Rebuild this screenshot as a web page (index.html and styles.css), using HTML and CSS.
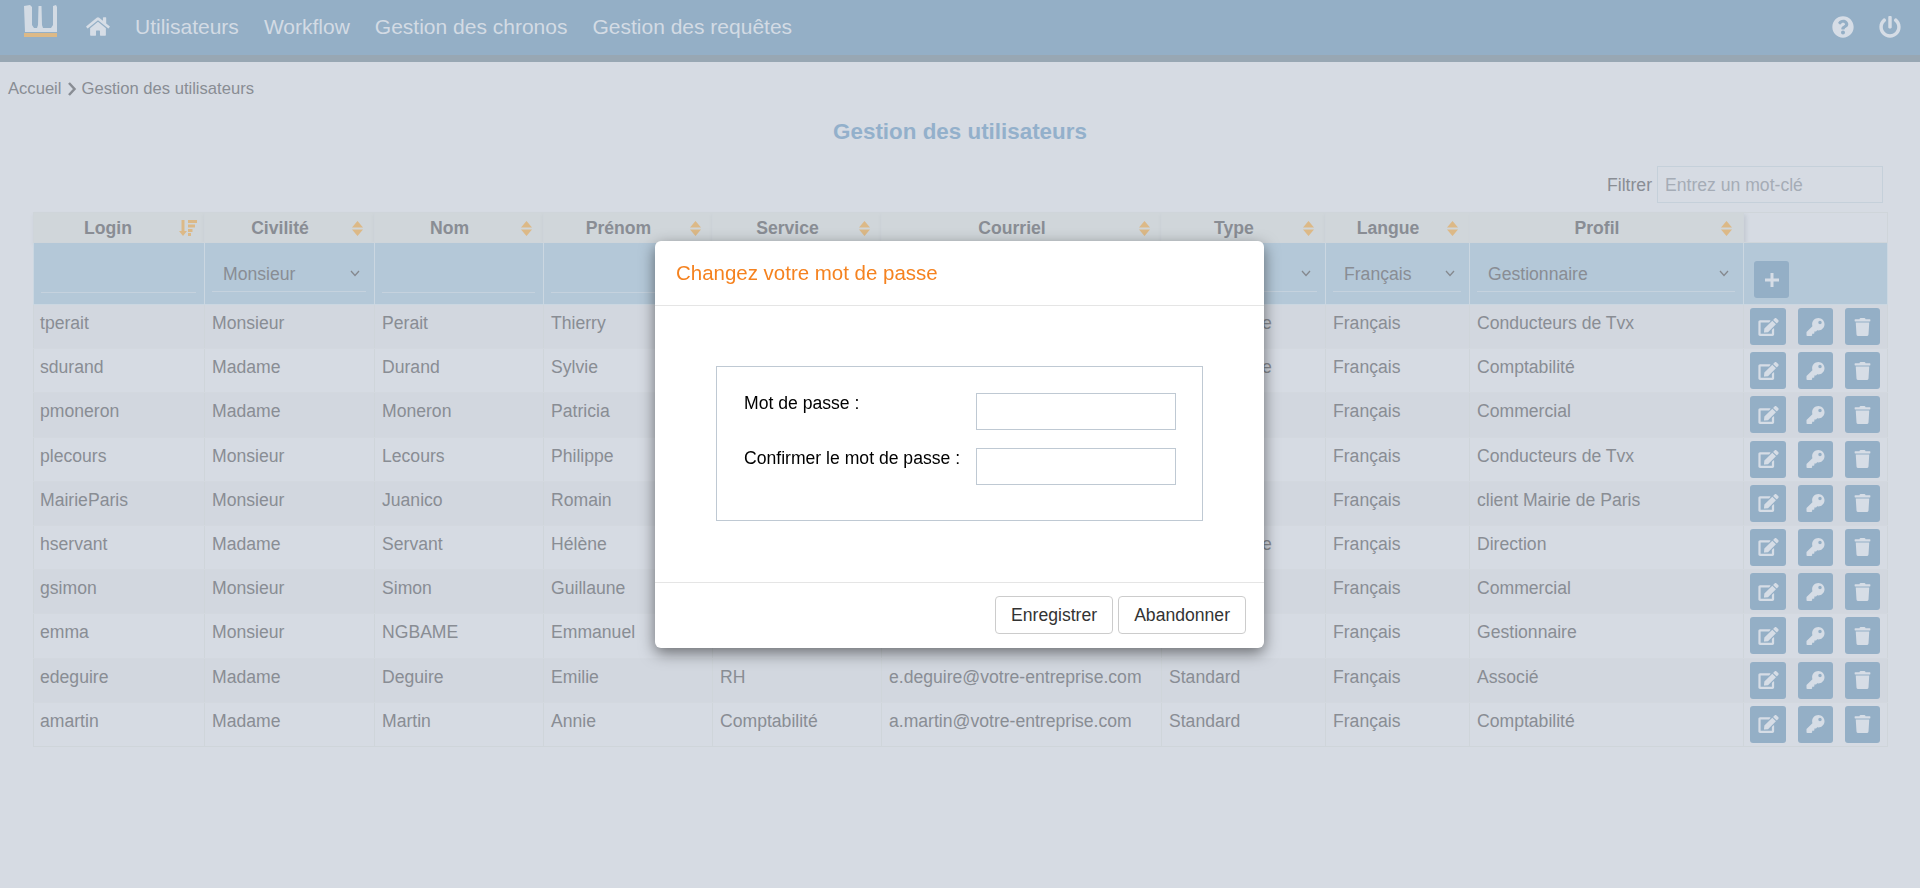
FILE: index.html
```html
<!DOCTYPE html>
<html lang="fr">
  <head>
    <meta charset="utf-8" />
    <title>Gestion des utilisateurs</title>
    <link rel="stylesheet" href="styles.css">
  </head>
  <body>
    <svg class="sprites" aria-hidden="true">
      <symbol id="i-home" viewBox="0 0 576 512"><path d="M280.37 148.26L96 300.11V464a16 16 0 0 0 16 16l112.06-.29a16 16 0 0 0 15.92-16V368a16 16 0 0 1 16-16h64a16 16 0 0 1 16 16v95.64a16 16 0 0 0 16 16.05L464 480a16 16 0 0 0 16-16V300L295.67 148.26a12.19 12.19 0 0 0-15.3 0zM571.6 251.47L488 182.56V44.05a12 12 0 0 0-12-12h-56a12 12 0 0 0-12 12v72.61L318.47 43a48 48 0 0 0-61 0L4.34 251.47a12 12 0 0 0-1.6 16.9l25.5 31A12 12 0 0 0 45.15 301l235.22-193.74a12.19 12.19 0 0 1 15.3 0L530.9 301a12 12 0 0 0 16.9-1.6l25.5-31a12 12 0 0 0-1.7-16.93z"/></symbol>
      <symbol id="i-help" viewBox="0 0 512 512"><path d="M504 256c0 136.997-111.043 248-248 248S8 392.997 8 256C8 119.083 119.043 8 256 8s248 111.083 248 248zM262.655 90c-54.497 0-89.255 22.957-116.549 63.758-3.536 5.286-2.353 12.415 2.715 16.258l34.699 26.31c5.205 3.947 12.621 3.008 16.665-2.122 17.864-22.658 30.113-35.797 57.303-35.797 20.429 0 45.698 13.148 45.698 32.958 0 14.976-12.363 22.667-32.534 33.976C247.128 238.528 216 254.941 216 296v4c0 6.627 5.373 12 12 12h56c6.627 0 12-5.373 12-12v-1.333c0-28.462 83.186-29.647 83.186-106.667 0-58.002-60.165-102-116.531-102zM256 338c-25.365 0-46 20.635-46 46 0 25.364 20.635 46 46 46s46-20.636 46-46c0-25.365-20.635-46-46-46z"/></symbol>
      <symbol id="i-power" viewBox="0 0 512 512"><path d="M400 54.1c63 45 104 118.6 104 201.9 0 136.8-110.8 247.7-247.5 248C120 504.3 8.2 393 8 256.4 7.9 173.1 48.9 99.3 111.8 54.2c11.7-8.3 28-4.8 35 7.7L162.6 90c5.9 10.5 3.1 23.8-6.6 31-41.5 30.8-68 79.6-68 134.9-.1 92.3 74.5 168.1 168 168.1 91.6 0 168.6-74.2 168-169.1-.3-51.8-24.7-101.8-68.1-134-9.7-7.2-12.4-20.5-6.5-30.9l15.8-28.1c7-12.4 23.2-16.1 34.8-7.8zM296 264V24c0-13.3-10.7-24-24-24h-32c-13.3 0-24 10.7-24 24v240c0 13.3 10.7 24 24 24h32c13.3 0 24-10.7 24-24z"/></symbol>
      <symbol id="i-edit" viewBox="0 0 576 512"><path d="M402.6 83.2l90.2 90.2c3.8 3.8 3.8 10 0 13.8L274.4 405.6l-92.8 10.3c-12.4 1.4-22.9-9.1-21.5-21.5l10.3-92.8L388.8 83.2c3.8-3.8 10-3.8 13.8 0zm162-22.9l-48.8-48.8c-15.2-15.2-39.9-15.2-55.2 0l-35.4 35.4c-3.8 3.8-3.8 10 0 13.8l90.2 90.2c3.8 3.8 10 3.8 13.8 0l35.4-35.4c15.2-15.3 15.2-40 0-55.2zM384 346.2V448H64V128h229.8c3.2 0 6.2-1.3 8.5-3.5l40-40c7.6-7.6 2.2-20.5-8.5-20.5H48C21.5 64 0 85.5 0 112v352c0 26.5 21.5 48 48 48h352c26.5 0 48-21.5 48-48V306.2c0-10.7-12.9-16-20.5-8.5l-40 40c-2.2 2.3-3.5 5.3-3.5 8.5z"/></symbol>
      <symbol id="i-key" viewBox="0 0 512 512"><path d="M512 176.001C512 273.203 433.202 352 336 352c-11.22 0-22.19-1.062-32.827-3.069l-24.012 27.014A23.999 23.999 0 0 1 261.223 384H224v40c0 13.255-10.745 24-24 24h-40v40c0 13.255-10.745 24-24 24H24c-13.255 0-24-10.745-24-24v-78.059c0-6.365 2.529-12.47 7.029-16.971l161.802-161.802C163.549 214.038 160 195.258 160 176 160 78.798 238.797.001 335.999 0 433.488-.001 512 78.511 512 176.001zM336 128c0 26.51 21.49 48 48 48s48-21.49 48-48-21.49-48-48-48-48 21.49-48 48z"/></symbol>
      <symbol id="i-trash" viewBox="0 0 448 512"><path d="M432 32H312l-9.4-18.7A24 24 0 0 0 281.1 0H166.8a23.72 23.72 0 0 0-21.4 13.3L136 32H16A16 16 0 0 0 0 48v32a16 16 0 0 0 16 16h416a16 16 0 0 0 16-16V48a16 16 0 0 0-16-16zM53.2 467a48 48 0 0 0 47.9 45h245.8a48 48 0 0 0 47.9-45L416 128H32z"/></symbol>
      <symbol id="i-plus" viewBox="0 0 16 16"><path d="M6.500 1h3v5.500H15v3H9.500V15h-3V9.500H1v-3h5.500z"/></symbol>
      <symbol id="i-sort" viewBox="0 0 11 15"><path d="M5.500 0L11 6.500H0zM0 8.500h11L5.500 15z"/></symbol>
      <symbol id="i-sort-desc" viewBox="0 0 18 16"><path d="M2.500 0h3v11H8l-4 5-4-5h2.500zM9 0h9v3H9zM9 4.500h7v3H9zM9 9h4.500v3H9zM9 13h3v3H9z"/></symbol>
    </svg>

    <header class="navbar">
      <svg class="logo" viewBox="0 0 33 32" aria-label="Logo">
        <path class="logo-mark" d="M0 1l6-1 2 2v18l2 3h3l1-3 .5-19h3l.500 19 1 3h8l2-3V1l3-1 1 2v25H1z"/>
        <rect class="logo-bar" x="0" y="28" width="33" height="4"/>
      </svg>
      <svg class="nav-home"><use href="#i-home"/></svg>
      <nav class="nav-links">
        <a href="#">Utilisateurs</a>
        <a href="#">Workflow</a>
        <a href="#">Gestion des chronos</a>
        <a href="#">Gestion des requêtes</a>
      </nav>
      <div class="nav-tools">
        <svg class="nav-tool"><use href="#i-help"/></svg>
        <svg class="nav-tool"><use href="#i-power"/></svg>
      </div>
    </header>

    <div class="breadcrumb">
      <span>Accueil</span>
      <svg class="crumb-sep" viewBox="0 0 10 14"><path d="M2 1l5.500 6L2 13"/></svg>
      <span>Gestion des utilisateurs</span>
    </div>

    <main class="content">
      <h1 class="page-title">Gestion des utilisateurs</h1>

      <div class="filter-bar">
        <label for="filter">Filtrer</label>
        <input id="filter" type="text" placeholder="Entrez un mot-clé" />
      </div>

      <table class="users">
        <colgroup>
          <col class="c-login" /><col class="c-civ" /><col class="c-nom" /><col class="c-prenom" /><col class="c-service" />
          <col class="c-mail" /><col class="c-type" /><col class="c-lang" /><col class="c-profil" /><col class="c-actions" />
        </colgroup>
        <thead>
          <tr class="head-row">
            <th><div class="th-in"><span>Login</span><svg class="sort-desc"><use href="#i-sort-desc"/></svg></div></th>
            <th><div class="th-in"><span>Civilité</span><svg class="sort"><use href="#i-sort"/></svg></div></th>
            <th><div class="th-in"><span>Nom</span><svg class="sort"><use href="#i-sort"/></svg></div></th>
            <th><div class="th-in"><span>Prénom</span><svg class="sort"><use href="#i-sort"/></svg></div></th>
            <th><div class="th-in"><span>Service</span><svg class="sort"><use href="#i-sort"/></svg></div></th>
            <th><div class="th-in"><span>Courriel</span><svg class="sort"><use href="#i-sort"/></svg></div></th>
            <th><div class="th-in"><span>Type</span><svg class="sort"><use href="#i-sort"/></svg></div></th>
            <th><div class="th-in"><span>Langue</span><svg class="sort"><use href="#i-sort"/></svg></div></th>
            <th class="th-last"><div class="th-in"><span>Profil</span><svg class="sort"><use href="#i-sort"/></svg></div></th>
            <th class="th-blank"></th>
          </tr>
          <tr class="new-row">
            <td><input class="flt" type="text" /></td>
            <td><select class="flt"><option>Monsieur</option></select></td>
            <td><input class="flt" type="text" /></td>
            <td><input class="flt" type="text" /></td>
            <td><input class="flt" type="text" /></td>
            <td><input class="flt" type="text" /></td>
            <td><select class="flt"><option></option></select></td>
            <td><select class="flt"><option>Français</option></select></td>
            <td><select class="flt"><option>Gestionnaire</option></select></td>
            <td><button class="act act-add" type="button"><svg><use href="#i-plus"/></svg></button></td>
          </tr>
        </thead>
        <tbody>
          <tr>
            <td>tperait</td><td>Monsieur</td><td>Perait</td><td>Thierry</td><td></td><td></td><td>Responsable</td><td>Français</td><td>Conducteurs de Tvx</td>
            <td class="actions"><div class="act-group"><button class="act act-edit" type="button"><svg><use href="#i-edit"/></svg></button><button class="act" type="button"><svg><use href="#i-key"/></svg></button><button class="act" type="button"><svg><use href="#i-trash"/></svg></button></div></td>
          </tr>
          <tr>
            <td>sdurand</td><td>Madame</td><td>Durand</td><td>Sylvie</td><td></td><td></td><td>Responsable</td><td>Français</td><td>Comptabilité</td>
            <td class="actions"><div class="act-group"><button class="act act-edit" type="button"><svg><use href="#i-edit"/></svg></button><button class="act" type="button"><svg><use href="#i-key"/></svg></button><button class="act" type="button"><svg><use href="#i-trash"/></svg></button></div></td>
          </tr>
          <tr>
            <td>pmoneron</td><td>Madame</td><td>Moneron</td><td>Patricia</td><td></td><td></td><td></td><td>Français</td><td>Commercial</td>
            <td class="actions"><div class="act-group"><button class="act act-edit" type="button"><svg><use href="#i-edit"/></svg></button><button class="act" type="button"><svg><use href="#i-key"/></svg></button><button class="act" type="button"><svg><use href="#i-trash"/></svg></button></div></td>
          </tr>
          <tr>
            <td>plecours</td><td>Monsieur</td><td>Lecours</td><td>Philippe</td><td></td><td></td><td></td><td>Français</td><td>Conducteurs de Tvx</td>
            <td class="actions"><div class="act-group"><button class="act act-edit" type="button"><svg><use href="#i-edit"/></svg></button><button class="act" type="button"><svg><use href="#i-key"/></svg></button><button class="act" type="button"><svg><use href="#i-trash"/></svg></button></div></td>
          </tr>
          <tr>
            <td>MairieParis</td><td>Monsieur</td><td>Juanico</td><td>Romain</td><td></td><td></td><td></td><td>Français</td><td>client Mairie de Paris</td>
            <td class="actions"><div class="act-group"><button class="act act-edit" type="button"><svg><use href="#i-edit"/></svg></button><button class="act" type="button"><svg><use href="#i-key"/></svg></button><button class="act" type="button"><svg><use href="#i-trash"/></svg></button></div></td>
          </tr>
          <tr>
            <td>hservant</td><td>Madame</td><td>Servant</td><td>Hélène</td><td></td><td></td><td>Responsable</td><td>Français</td><td>Direction</td>
            <td class="actions"><div class="act-group"><button class="act act-edit" type="button"><svg><use href="#i-edit"/></svg></button><button class="act" type="button"><svg><use href="#i-key"/></svg></button><button class="act" type="button"><svg><use href="#i-trash"/></svg></button></div></td>
          </tr>
          <tr>
            <td>gsimon</td><td>Monsieur</td><td>Simon</td><td>Guillaune</td><td></td><td></td><td></td><td>Français</td><td>Commercial</td>
            <td class="actions"><div class="act-group"><button class="act act-edit" type="button"><svg><use href="#i-edit"/></svg></button><button class="act" type="button"><svg><use href="#i-key"/></svg></button><button class="act" type="button"><svg><use href="#i-trash"/></svg></button></div></td>
          </tr>
          <tr>
            <td>emma</td><td>Monsieur</td><td>NGBAME</td><td>Emmanuel</td><td></td><td></td><td></td><td>Français</td><td>Gestionnaire</td>
            <td class="actions"><div class="act-group"><button class="act act-edit" type="button"><svg><use href="#i-edit"/></svg></button><button class="act" type="button"><svg><use href="#i-key"/></svg></button><button class="act" type="button"><svg><use href="#i-trash"/></svg></button></div></td>
          </tr>
          <tr>
            <td>edeguire</td><td>Madame</td><td>Deguire</td><td>Emilie</td><td>RH</td><td>e.deguire@votre-entreprise.com</td><td>Standard</td><td>Français</td><td>Associé</td>
            <td class="actions"><div class="act-group"><button class="act act-edit" type="button"><svg><use href="#i-edit"/></svg></button><button class="act" type="button"><svg><use href="#i-key"/></svg></button><button class="act" type="button"><svg><use href="#i-trash"/></svg></button></div></td>
          </tr>
          <tr>
            <td>amartin</td><td>Madame</td><td>Martin</td><td>Annie</td><td>Comptabilité</td><td>a.martin@votre-entreprise.com</td><td>Standard</td><td>Français</td><td>Comptabilité</td>
            <td class="actions"><div class="act-group"><button class="act act-edit" type="button"><svg><use href="#i-edit"/></svg></button><button class="act" type="button"><svg><use href="#i-key"/></svg></button><button class="act" type="button"><svg><use href="#i-trash"/></svg></button></div></td>
          </tr>
        </tbody>
      </table>
    </main>

    <!-- Password dialog, sits over the dimmed page -->
    <div class="modal-wrap">
      <div class="modal">
        <div class="modal-head">Changez votre mot de passe</div>
        <div class="modal-body">
          <form class="pwd-box">
            <label for="pwd1">Mot de passe :</label>
            <input id="pwd1" type="password" />
            <label for="pwd2">Confirmer le mot de passe :</label>
            <input id="pwd2" type="password" />
          </form>
        </div>
        <div class="modal-foot">
          <button class="btn" type="button">Enregistrer</button>
          <button class="btn" type="button">Abandonner</button>
        </div>
      </div>
    </div>
  </body>
</html>
```

FILE: styles.css
```css
* {
  box-sizing: border-box;
}
body {
  margin: 0;
  min-height: 100vh;
  background-color: #d6dbe3;
  color: #898d94;
  font-family: "Liberation Sans", Arial, sans-serif;
  font-size: 17.6px;
}
.sprites {
  display: none;
}

/* top bar */
.navbar {
  display: flex;
  align-items: flex-start;
  height: 62px;
  background-color: #94afc6;
  border-bottom: 7px solid #98a7b3;
  padding: 5px 19px 0 24px;
}
.logo {
  width: 33px;
  height: 32px;
  flex: none;
}
.logo-mark {
  fill: #d3dbe4;
}
.logo-bar {
  fill: #dcb987;
}
.nav-home {
  width: 24px;
  height: 21px;
  margin: 11px 0 0 29px;
  fill: #d6dde6;
  flex: none;
}
.nav-links {
  display: flex;
  gap: 25px;
  margin: 10px 0 0 25px;
}
.nav-links a {
  color: #d3dbe4;
  font-size: 21px;
  line-height: 24px;
  text-decoration: none;
}
.nav-tools {
  display: flex;
  gap: 25px;
  margin: 11px 0 0 auto;
}
.nav-tool {
  width: 22px;
  height: 22px;
  fill: #d6dde6;
}

.breadcrumb {
  display: flex;
  align-items: center;
  gap: 5px;
  padding: 17px 8px 0;
  font-size: 16.6px;
  line-height: 20px;
}
.crumb-sep {
  width: 10px;
  height: 14px;
  fill: none;
  stroke: #898d94;
  stroke-width: 2.500;
}

.content {
  padding: 0 33px;
}
.page-title {
  margin: 20px 0 0;
  text-align: center;
  color: #93b0cb;
  font-size: 22.4px;
  line-height: 26px;
}
.filter-bar {
  display: flex;
  justify-content: flex-end;
  align-items: center;
  gap: 5px;
  margin-top: 21px;
  padding-right: 4px;
}
.filter-bar label {
  padding-top: 2px;
}
.filter-bar input {
  width: 226px;
  height: 37px;
  padding: 2px 7px 0;
  background: transparent;
  border: 1px solid #c5d0da;
  font: inherit;
}
.filter-bar input::placeholder {
  color: #a5acb6;
}

/* table */
.users {
  width: 1854px;
  margin-top: 9px;
  border-collapse: collapse;
  table-layout: fixed;
}
.c-login { width: 171px; }
.c-civ { width: 170px; }
.c-nom { width: 169px; }
.c-prenom { width: 169px; }
.c-service { width: 169px; }
.c-mail { width: 280px; }
.c-type { width: 164px; }
.c-lang { width: 144px; }
.c-profil { width: 274px; }
.c-actions { width: 144px; }

.users th,
.users td {
  border: 1px solid #cfd5da;
  padding: 0;
}
.head-row th {
  height: 30px;
  padding-top: 1px;
  background-color: #d0d6da;
  font-size: 17.6px;
  box-shadow: 0 2px 4px rgba(120, 130, 140, 0.15);
}
.head-row .th-last {
  box-shadow: 2px 2px 4px rgba(120, 130, 140, 0.2);
}
.head-row .th-blank {
  background: transparent;
  box-shadow: none;
}
.th-in {
  display: flex;
  align-items: center;
  padding: 0 7px 0 8px;
}
.th-in span {
  flex: 1;
  margin-right: 5px;
  text-align: center;
}
.sort {
  width: 11px;
  height: 15px;
  margin-right: 4px;
  fill: #dcb987;
  flex: none;
}
.sort-desc {
  width: 18px;
  height: 16px;
  fill: #dcb987;
  flex: none;
}

.new-row td {
  height: 62px;
  background-color: #b4c8d8;
  border-color: #cbd7e1;
  vertical-align: top;
  padding: 13px 8px 0 7px;
}
.flt {
  display: block;
  width: 100%;
  height: 36px;
  background-color: transparent;
  border: 0;
  border-bottom: 1px solid #c5d2de;
  color: #898d94;
  font: inherit;
}
input.flt {
  margin-top: 1px;
}
select.flt {
  appearance: none;
  padding: 0 11px;
  background: url("data:image/svg+xml,%3Csvg xmlns='http://www.w3.org/2000/svg' width='10' height='7'%3E%3Cpath d='M1 1l4 4.500L9 1' fill='none' stroke='%2385898f' stroke-width='1.300'/%3E%3C/svg%3E") no-repeat right 6px center;
}
.new-row td:last-child {
  padding: 18px 0 0 10px;
}

.users tbody tr {
  height: 44.2px;
}
.users tbody td {
  padding: 7px 7px 0;
  border-top-color: #d3d8df;
  border-bottom-color: #d3d8df;
  vertical-align: top;
  line-height: 22px;
  white-space: nowrap;
}
.users tbody tr:last-child td {
  border-bottom-color: #cfd5da;
}
.users tbody td:first-child {
  padding-left: 6px;
}
.users tbody tr:nth-child(odd) {
  background-color: #d2d7df;
}
.users tbody td.actions {
  padding: 3px 0 0 6px;
}
.act-group {
  display: flex;
  gap: 12px;
}
.act {
  display: flex;
  align-items: center;
  justify-content: center;
  flex: none;
  width: 35px;
  height: 37px;
  padding: 0;
  background-color: #94afc6;
  border: 0;
  border-radius: 3px;
}
.act-edit {
  width: 36px;
}
.act svg {
  width: 21px;
  height: 18px;
  fill: #d6dde6;
}
.act-add svg {
  width: 16px;
  height: 16px;
}

/* dialog */
.modal-wrap {
  position: fixed;
  inset: 0;
  display: flex;
  justify-content: center;
  align-items: flex-start;
  padding: 241px 1px 0 0;
}
.modal {
  width: 609px;
  height: 407px;
  display: flex;
  flex-direction: column;
  background: #fff;
  border-radius: 6px;
  box-shadow: 0 5px 15px rgba(0, 0, 0, 0.5);
  color: #000;
}
.modal-head {
  height: 65px;
  padding: 20px 20px 0 21px;
  border-bottom: 1px solid #e5e5e5;
  color: #f5821f;
  font-size: 20.48px;
  line-height: 24px;
}
.modal-body {
  flex: 1;
  padding: 60px 61px 0;
}
.pwd-box {
  display: grid;
  grid-template-columns: 232px 200px;
  grid-auto-rows: 37px;
  row-gap: 18px;
  height: 155px;
  padding: 26px 0 0 27px;
  border: 1px solid #bfc9d3;
}
.pwd-box label {
  line-height: 21px;
}
.pwd-box input {
  width: 200px;
  height: 37px;
  border: 1px solid #bfc9d3;
}
.modal-foot {
  display: flex;
  justify-content: flex-end;
  gap: 5px;
  height: 66px;
  padding: 13px 18px 0 0;
  border-top: 1px solid #e5e5e5;
}
.btn {
  height: 38px;
  padding: 0 15px;
  background: #fff;
  border: 1px solid #ccc;
  border-radius: 4px;
  color: #333;
  font: inherit;
}
```
